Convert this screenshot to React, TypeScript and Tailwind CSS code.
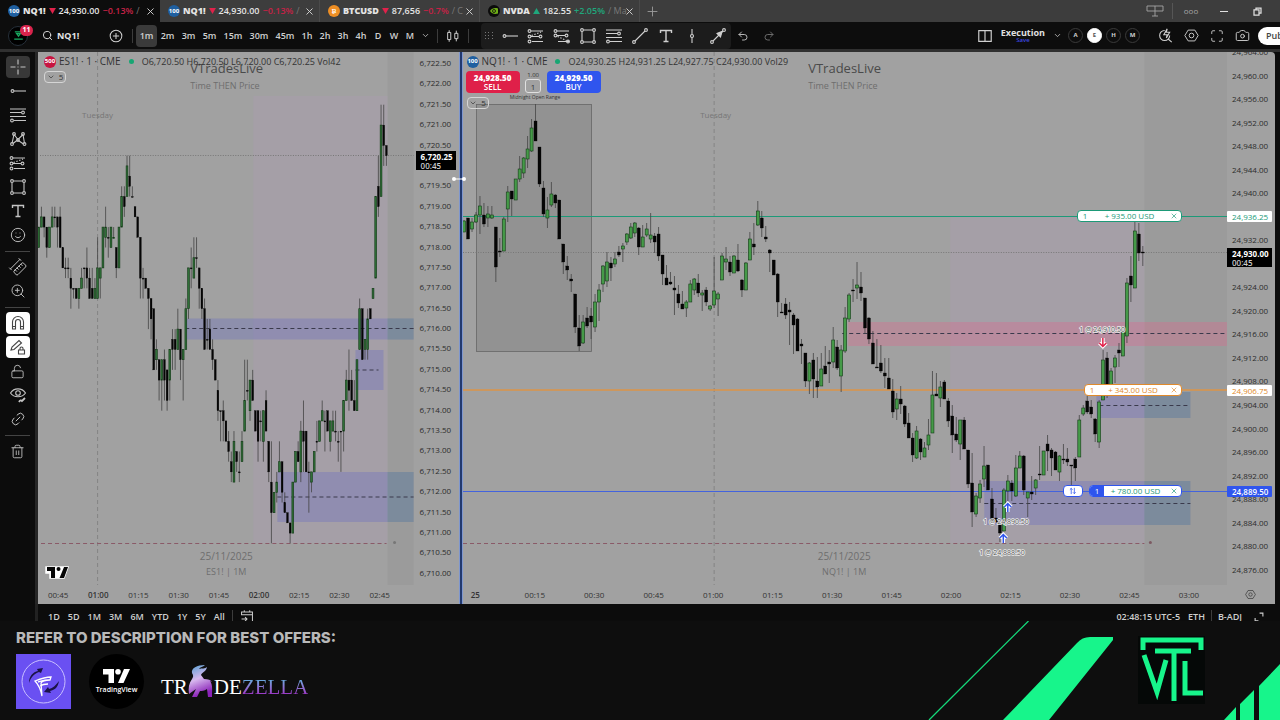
import type { ReactNode } from "react";
import {
  Camera,
  ChevronDown,
  Eye,
  Link2,
  LockOpen,
  Maximize,
  PencilLine,
  Redo2,
  RulerDimensionLine,
  Search,
  Smile,
  Trash2,
  Undo2,
  X,
  ZoomIn,
} from "lucide-react";

// high, body top, body bottom, low, 1 = up; one entry per minute
type Candle = [number, number, number, number, number];

// values are quarter-point ticks below 6,720.25, first candle is 22 minutes before 01:00
const ES_START = -22;
const ES: Candle[] = [
  [7, 7, 9, 9, 1], [5, 6, 7, 7, 1], [6, 6, 7, 8, 0], [7, 7, 9, 10, 0], [7, 7, 9, 9, 1], [5, 6, 7, 7, 1],
  [5, 6, 6, 7, 0], [6, 6, 7, 9, 0], [5, 6, 9, 9, 0], [9, 9, 11, 11, 0], [10, 11, 11, 12, 0], [10, 11, 11, 12, 0],
  [11, 12, 13, 15, 0], [13, 13, 13, 14, 0], [13, 13, 14, 14, 0], [13, 13, 14, 15, 1], [11, 12, 13, 13, 1], [11, 11, 11, 13, 0],
  [9, 11, 12, 13, 0], [11, 12, 14, 14, 0], [11, 13, 14, 14, 0], [12, 13, 14, 14, 1], [8, 11, 14, 14, 1], [11, 11, 12, 14, 1],
  [7, 7, 11, 11, 1], [5, 7, 8, 9, 1], [7, 8, 8, 10, 0], [7, 7, 9, 9, 1], [7, 8, 8, 8, 1], [9, 9, 11, 12, 0],
  [7, 7, 11, 11, 1], [3, 4, 7, 7, 1], [3, 4, 5, 6, 0], [0, 1, 4, 4, 1], [0, 2, 3, 4, 0], [3, 4, 4, 4, 0],
  [5, 5, 6, 6, 0], [6, 6, 8, 8, 0], [8, 8, 12, 14, 0], [11, 12, 12, 14, 0], [12, 12, 13, 13, 0], [13, 13, 14, 17, 0],
  [14, 14, 16, 18, 0], [15, 15, 21, 21, 0], [18, 19, 20, 21, 1], [20, 20, 22, 24, 0], [20, 20, 22, 25, 1], [19, 20, 22, 24, 0],
  [21, 21, 24, 25, 0], [19, 19, 22, 24, 1], [17, 18, 19, 21, 0], [17, 18, 19, 21, 0], [15, 17, 19, 19, 1], [17, 17, 20, 22, 0],
  [19, 19, 20, 24, 1], [14, 15, 19, 19, 1], [11, 11, 15, 16, 1], [9, 11, 11, 13, 0], [8, 10, 12, 12, 1], [8, 10, 10, 11, 0],
  [11, 11, 13, 15, 0], [13, 13, 15, 16, 0], [14, 15, 19, 19, 0], [16, 18, 18, 19, 0], [16, 17, 19, 19, 0], [18, 19, 20, 21, 0],
  [20, 20, 22, 22, 0], [22, 23, 25, 26, 0], [25, 25, 25, 28, 0], [24, 25, 26, 28, 0], [26, 26, 28, 28, 0], [27, 28, 29, 30, 0],
  [29, 30, 31, 32, 0], [27, 28, 32, 32, 1], [29, 29, 30, 31, 0], [29, 31, 31, 32, 0], [27, 28, 30, 30, 1], [20, 24, 27, 27, 1],
  [20, 23, 23, 24, 0], [22, 22, 25, 26, 1], [21, 22, 24, 24, 0], [25, 25, 27, 27, 0], [25, 25, 28, 30, 0], [25, 26, 26, 28, 0],
  [25, 25, 28, 30, 1], [23, 24, 27, 27, 0], [28, 28, 31, 32, 0], [28, 32, 35, 38, 0], [33, 33, 35, 35, 1], [31, 32, 33, 34, 1],
  [28, 30, 31, 31, 1], [30, 30, 33, 34, 0], [33, 34, 35, 35, 0], [35, 35, 36, 36, 0], [36, 36, 37, 38, 0], [32, 32, 37, 37, 1],
  [29, 29, 32, 32, 1], [28, 29, 30, 30, 0], [26, 27, 31, 32, 1], [24, 27, 28, 31, 0], [27, 27, 31, 31, 0], [30, 31, 31, 35, 0],
  [31, 31, 32, 33, 1], [29, 29, 31, 31, 1], [26, 28, 28, 29, 0], [26, 26, 28, 28, 1], [24, 25, 26, 26, 1], [25, 26, 26, 29, 0],
  [25, 25, 27, 27, 0], [26, 26, 28, 29, 1], [25, 26, 27, 27, 1], [25, 27, 27, 28, 0], [27, 28, 28, 30, 0], [27, 27, 27, 31, 0],
  [24, 24, 27, 29, 1], [21, 22, 24, 24, 1], [19, 22, 23, 25, 0], [21, 22, 24, 24, 0], [22, 24, 25, 25, 0], [20, 20, 25, 25, 1],
  [14, 15, 19, 19, 1], [15, 15, 20, 20, 0], [18, 18, 19, 20, 1], [15, 16, 19, 20, 1], [15, 15, 16, 16, 0], [13, 13, 14, 14, 1],
  [4, 4, 12, 12, 1], [0, 3, 5, 6, 0], [-5, -3, 4, 4, 1], [-5, -3, -1, 1, 0], [-1, -1, 0, 1, 0],
];

// values are plot heights, first candle is 63 minutes before 01:00
const NQ_START = -63;
const NQ: Candle[] = [
  [220, 221, 232, 232, 1], [218, 218, 239, 239, 0], [218, 222, 229, 232, 1], [212, 215, 222, 223, 1], [196, 206, 215, 234, 1], [203, 215, 224, 227, 0],
  [206, 214, 218, 227, 1], [206, 215, 218, 219, 1], [227, 227, 267, 282, 0], [238, 251, 252, 257, 0], [217, 219, 251, 251, 1], [186, 192, 209, 222, 1],
  [191, 191, 199, 216, 0], [179, 179, 200, 200, 1], [156, 169, 179, 182, 1], [157, 158, 173, 178, 1], [136, 149, 159, 168, 1], [119, 128, 151, 152, 1],
  [104, 121, 141, 141, 0], [147, 147, 184, 187, 0], [181, 188, 214, 217, 0], [197, 210, 218, 228, 1], [182, 194, 205, 207, 1], [194, 195, 203, 208, 0],
  [200, 200, 239, 239, 0], [244, 244, 262, 274, 0], [256, 266, 270, 280, 0], [274, 279, 281, 292, 0], [294, 294, 327, 333, 0], [315, 328, 346, 351, 0],
  [315, 322, 343, 344, 1], [307, 318, 326, 328, 0], [308, 316, 322, 339, 0], [294, 302, 327, 332, 1], [284, 290, 302, 321, 1], [265, 266, 284, 292, 1],
  [252, 262, 281, 287, 1], [257, 263, 268, 281, 0], [252, 259, 264, 267, 1], [246, 252, 255, 257, 0], [243, 246, 249, 262, 1], [233, 234, 242, 245, 1],
  [223, 227, 238, 239, 1], [222, 223, 233, 237, 1], [227, 228, 247, 255, 0], [225, 237, 247, 247, 1], [223, 229, 235, 237, 1], [213, 235, 239, 243, 1],
  [233, 236, 242, 253, 0], [227, 234, 256, 261, 0], [255, 255, 274, 285, 0], [265, 278, 285, 285, 0], [272, 282, 284, 285, 0], [276, 288, 290, 315, 0],
  [285, 294, 303, 308, 0], [291, 304, 309, 309, 0], [300, 302, 308, 317, 1], [280, 284, 302, 302, 1], [278, 279, 290, 295, 1], [274, 283, 293, 297, 0],
  [290, 293, 295, 311, 1], [287, 290, 302, 306, 0], [305, 306, 309, 311, 1], [257, 291, 305, 308, 1], [292, 294, 299, 316, 1], [253, 256, 280, 280, 1],
  [247, 259, 262, 270, 1], [256, 262, 272, 276, 0], [255, 256, 273, 273, 1], [244, 260, 271, 272, 0], [279, 280, 290, 297, 0], [262, 263, 290, 290, 1],
  [232, 239, 260, 260, 1], [223, 244, 247, 255, 0], [201, 211, 225, 226, 1], [211, 218, 228, 237, 0], [226, 237, 239, 242, 0], [249, 250, 253, 272, 0],
  [260, 260, 275, 275, 0], [273, 274, 302, 317, 0], [303, 312, 313, 313, 0], [298, 304, 315, 319, 0], [302, 310, 312, 345, 0], [313, 315, 325, 354, 0],
  [318, 319, 351, 351, 0], [339, 344, 346, 364, 0], [353, 353, 381, 387, 0], [362, 363, 381, 394, 1], [353, 360, 379, 398, 0], [357, 381, 387, 398, 0],
  [353, 369, 386, 386, 1], [346, 366, 374, 374, 0], [350, 362, 364, 383, 0], [327, 340, 362, 368, 1], [340, 347, 368, 370, 0], [345, 350, 376, 392, 1],
  [307, 318, 351, 353, 1], [293, 295, 319, 322, 1], [279, 290, 291, 302, 0], [262, 285, 288, 299, 1], [272, 287, 293, 301, 0], [298, 298, 328, 334, 0],
  [317, 318, 339, 344, 0], [331, 343, 364, 364, 0], [339, 367, 368, 368, 0], [345, 363, 371, 373, 0], [358, 373, 376, 388, 0], [358, 378, 389, 389, 0],
  [379, 391, 412, 418, 0], [393, 399, 409, 420, 1], [386, 399, 404, 414, 0], [405, 406, 424, 427, 0], [413, 423, 438, 438, 0], [433, 438, 455, 462, 0],
  [426, 431, 458, 459, 1], [438, 439, 452, 460, 0], [442, 448, 457, 457, 1], [419, 435, 445, 450, 1], [371, 395, 433, 433, 1], [373, 394, 396, 396, 0],
  [381, 387, 398, 407, 1], [380, 382, 399, 399, 0], [398, 401, 421, 427, 0], [405, 416, 435, 453, 0], [417, 434, 440, 442, 0], [420, 420, 444, 460, 1],
  [417, 420, 449, 449, 0], [450, 450, 484, 488, 0], [453, 483, 512, 527, 0], [493, 496, 514, 517, 1], [480, 484, 498, 503, 1], [446, 466, 479, 487, 1],
  [465, 465, 490, 490, 0], [488, 499, 519, 519, 0], [508, 518, 522, 523, 0], [522, 524, 533, 542, 0], [488, 490, 531, 531, 1], [475, 481, 491, 501, 1],
  [480, 483, 491, 501, 0], [455, 468, 496, 497, 1], [451, 456, 468, 468, 1], [455, 456, 490, 495, 0], [492, 492, 498, 517, 1], [476, 492, 494, 500, 0],
  [479, 480, 488, 495, 1], [446, 474, 475, 480, 0], [451, 451, 475, 475, 1], [435, 444, 451, 471, 0], [448, 450, 458, 476, 0], [451, 452, 470, 470, 0],
  [455, 456, 472, 481, 1], [444, 459, 460, 464, 0], [448, 459, 462, 466, 0], [465, 465, 466, 487, 0], [457, 459, 468, 481, 0], [415, 420, 457, 457, 1],
  [405, 408, 414, 416, 1], [395, 401, 412, 414, 0], [400, 407, 414, 418, 0], [418, 419, 434, 442, 0], [400, 402, 442, 448, 1], [350, 360, 400, 400, 1],
  [352, 358, 384, 398, 0], [368, 371, 390, 390, 1], [355, 358, 367, 383, 1], [343, 350, 353, 367, 0], [330, 332, 356, 356, 1], [278, 283, 336, 343, 1],
  [256, 276, 285, 302, 0], [221, 231, 288, 288, 1], [223, 234, 253, 261, 0], [246, 252, 253, 266, 0],
];

// rows hidden behind a price tag stay blank
const scale = (from: number, step: number, count: number, blank: number[]) =>
  Array.from({ length: count }, (_, i) => {
    const v = from - i * step;
    return blank.includes(v) ? "" : v.toLocaleString("en-US", { minimumFractionDigits: 2 });
  });

const esPrices = scale(6722.5, 0.5, 26, [6720]);
const nqPrices = scale(24964, 4, 23, [24936, 24928]);
const esTimes = ["00:45", "01:00", "01:15", "01:30", "01:45", "02:00", "02:15", "02:30", "02:45"];
const nqTimes = ["25", "00:15", "00:30", "00:45", "01:00", "01:15", "01:30", "01:45", "02:00", "02:15", "02:30", "02:45", "03:00"];

const intervals = [
  { label: "1m", w: "w-[21px]" }, { label: "2m", w: "w-[21px]" }, { label: "3m", w: "w-[21px]" }, { label: "5m", w: "w-[21px]" },
  { label: "15m", w: "w-[26px]" }, { label: "30m", w: "w-[26px]" }, { label: "45m", w: "w-[26px]" },
  { label: "1h", w: "w-[18px]" }, { label: "2h", w: "w-[18px]" }, { label: "3h", w: "w-[18px]" }, { label: "4h", w: "w-[18px]" },
  { label: "D", w: "w-4" }, { label: "W", w: "w-4" }, { label: "M", w: "w-4" },
];

const PLOT_H = 533;
const PLOT_TOP = 52;
const pct = (y: number) => `${((y - PLOT_TOP) / PLOT_H) * 100}%`;

function Icon({ children, size = 18 }: { children: ReactNode; size?: number }) {
  return (
    <svg width={size} height={size} viewBox="0 0 18 18" fill="none" stroke="currentColor" strokeWidth="1.1" aria-hidden="true">
      {children}
    </svg>
  );
}

const Ring = ({ x, y }: { x: number; y: number }) => <circle cx={x} cy={y} r="1.4" />;

const HRay = () => <Icon><Ring x={3.5} y={9} /><path d="M5 9h12" /></Icon>;
const FibRetrace = () => (
  <Icon><path d="M1 3h16M1 6.500h11.500M1 10.500h16M5 14.500h12" /><Ring x={14} y={6.5} /><Ring x={3} y={14.5} /></Icon>
);
const Position = () => (
  <Icon>
    <path d="M4 4h12M4 9.500h8M5 14.500h11" /><path d="M4.500 8.500 14 5" strokeDasharray="1.500 1.500" />
    <Ring x={2.5} y={4} /><Ring x={2.5} y={9.5} /><Ring x={13.5} y={9.5} /><Ring x={2.5} y={14.5} />
  </Icon>
);
const ShortPosition = () => (
  <Icon>
    <path d="M4 4h12M4 8.500h8M5 14.500h11" /><path d="m4.500 9.500 9 4" strokeDasharray="1.500 1.500" />
    <Ring x={2.5} y={4} /><Ring x={2.5} y={8.5} /><Ring x={13.5} y={8.5} /><Ring x={15} y={14.5} />
  </Icon>
);
const RectTool = () => (
  <Icon>
    <path d="M4.500 3h9M4.500 15h9M3 4.500v9M15 4.500v9" />
    <Ring x={3} y={3} /><Ring x={15} y={3} /><Ring x={3} y={15} /><Ring x={15} y={15} />
  </Icon>
);
const Pattern = () => (
  <Icon>
    <path d="M3 13.500 5 4.500l4 5 5-5 1.500 9M4 13.500l4.500-3.500 6 4" />
    <Ring x={3} y={14} /><Ring x={5} y={4} /><Ring x={9} y={10} /><Ring x={14} y={4} /><Ring x={15.5} y={14} />
  </Icon>
);
const Trend = () => <Icon><Ring x={3} y={15} /><Ring x={15} y={3} /><path d="M4 14 14 4" /></Icon>;
const TextTool = () => <Icon><path d="M3.500 6V3.500h11V6M9 3.500v11M6.500 14.500h5" strokeWidth="1.400" /></Icon>;
const VLine = () => <Icon><path d="M9 2v5.500M9 10.500V16" /><circle cx="9" cy="9" r="1.500" /></Icon>;
const ArrowTool = () => (
  <Icon><Ring x={3} y={15} /><Ring x={15} y={3} /><path d="M4 14 14 4" /><path d="m13 4.500-1.500 5.500-3.500-3.500z" fill="currentColor" /></Icon>
);
const MagnetIcon = () => (
  <Icon><path d="M3.500 15V8a5.500 5.500 0 0 1 11 0v7h-3V8a2.500 2.500 0 0 0-5 0v7zM3.500 12.500h3M11.500 12.500h3" /></Icon>
);
const PencilLock = () => (
  <Icon><path d="m2 12 1-3 7-6.500 2.500 2.500L5 11.500zM9.500 12h6v4h-6zM11 12v-1.500a1.500 1.500 0 0 1 3 0V12" /></Icon>
);
const EyeBrush = () => (
  <Icon><path d="M1.500 7C5 1.500 13 1.500 16.500 7 13 12 5 12 1.500 7z" /><circle cx="9" cy="7" r="2.300" /><path d="M10 16c1-2 2-2 3-1l3-3" strokeWidth="1.800" /></Icon>
);
const Crosshair = () => <Icon><path d="M9 1.500v5M9 11.500v5M1.500 9h5M11.500 9h5M8.500 9h1" /></Icon>;
const CandlesIcon = () => <Icon size={16}><path d="M3 5h3.500v8H3zM4.700 2.500V5M4.700 13v2.500M11 6h3.500v6H11zM12.700 3v3M12.700 12v3" /></Icon>;
const HexNut = ({ size = 16 }: { size?: number }) => (
  <Icon size={size}><path d="M5 2.500h8L17 9l-4 6.500H5L1 9z" /><circle cx="9" cy="9" r="2.800" /></Icon>
);

function Candles({ data, start, x0, step, width, green, y }: {
  data: Candle[]; start: number; x0: number; step: number; width: number; green: string; y: (v: number) => number;
}) {
  return (
    <g>
      {data.map(([high, top, bottom, low, up], i) => {
        const x = x0 + (start + i) * step;
        const h = Math.max(y(bottom) - y(top), 1);
        return (
          <g key={i}>
            <path d={`M${x} ${y(high)}V${y(low)}`} stroke="#444" strokeWidth="0.8" />
            <rect x={x - width / 2} y={y(top)} width={width} height={h} fill={up ? green : "#050505"} stroke={up ? "#153a18" : "#050505"} strokeWidth={up ? 0.6 : 0.3} />
          </g>
        );
      })}
    </g>
  );
}

function Tab({ badge, symbol, price, change, rest, up, active }: {
  badge: ReactNode; symbol: string; price: string; change: string; rest: string; up?: boolean; active?: boolean;
}) {
  return (
    <div className={`flex w-40 shrink-0 items-center pl-2 pr-1 ${active ? "bg-[#0d0d0d]" : "border-r border-[#4a4a4a]"}`}>
      {badge}
      <a href="#chart" className="ml-[3px] flex min-w-0 flex-1 items-center gap-[3px] whitespace-nowrap text-[9px] font-semibold text-[#e4e4e4]">
        <b>{symbol}</b>
        <svg viewBox="0 0 8 7" className={`h-[6px] w-[7px] shrink-0 ${up ? "rotate-180 text-[#1fa77c]" : "text-[#e0224b]"}`}>
          <path d="M0 0h8L4 7z" fill="currentColor" />
        </svg>
        <span>{price}</span>
        <span className={up ? "text-[#1fa77c]" : "text-[#c52246]"}>{change}</span>
        <span className="font-normal text-[#777]">{rest}</span>
      </a>
      <button aria-label={`Close ${symbol}`} className="text-[#d8d8d8]"><X size={11} /></button>
    </div>
  );
}

const IndexBadge = ({ n, color }: { n: string; color: string }) => (
  <span className={`flex size-3 shrink-0 items-center justify-center rounded-full text-[6px] font-bold text-white ${color}`}>{n}</span>
);

const Sep = () => <span className="h-[14px] w-px shrink-0 bg-[#3c3c3c]" />;

function TopBar() {
  return (
    <header className="shrink-0">
      <nav className="flex h-[22px] bg-[#3d3d3d]">
        <Tab active badge={<IndexBadge n="100" color="bg-[#1f5fa0]" />} symbol="NQ1!" price="24,930.00" change="−0.13%" rest="/" />
        <Tab badge={<IndexBadge n="100" color="bg-[#1f5fa0]" />} symbol="NQ1!" price="24,930.00" change="−0.13%" rest="/" />
        <Tab badge={<IndexBadge n="₿" color="bg-[#ee8e24]" />} symbol="BTCUSD" price="87,656" change="−0.7%" rest="/ C" />
        <Tab
          up
          badge={
            <svg viewBox="0 0 12 12" className="size-3 shrink-0">
              <circle cx="6" cy="6" r="6" fill="#0b0b0b" />
              <path d="M2 6c2-3 5-3.500 8-2.500v5C7 9.500 4 9 2 6z" fill="#6fae17" />
              <circle cx="6" cy="6" r="1.500" fill="none" stroke="#0b0b0b" strokeWidth="0.800" />
            </svg>
          }
          symbol="NVDA" price="182.55" change="+2.05%" rest="/ Ma"
        />
        <button aria-label="New tab" className="ml-[7px] text-[#9a9a9a]"><Icon size={11}><path d="M9 1v16M1 9h16" strokeWidth="1.500" /></Icon></button>
        <div className="ml-auto flex items-center text-[#a5a5a5]">
          <Icon><path d="M1 4h16v5H1zM9 4v10M6 14h6" strokeWidth="0.900" /></Icon>
          <span className="mx-2 h-4 w-px bg-[#565656]" />
          <button aria-label="More" className="w-5 text-[8px]">ooo</button>
          <button aria-label="Minimize" className="ml-3 flex w-[22px] justify-center text-[#e0e0e0]"><i className="h-px w-2 bg-current" /></button>
          <button aria-label="Restore" className="ml-[18px] mr-[18px] text-[#e0e0e0]">
            <Icon size={9}><path d="M2 5.500h10V16H2zM6 5V2h10v10h-4" strokeWidth="2.500" /></Icon>
          </button>
        </div>
      </nav>

      <div className="flex h-[27px] items-center bg-[#0d0d0d] text-[#d0d0d0]">
        <div className="relative ml-2 flex size-5 shrink-0 items-center justify-center rounded-full border border-[#26303a] bg-black text-[#1aa860]">
          <Icon size={11}><path d="M3 3h12M6 6h6l-3 4zM2 15h14" strokeWidth="2" /></Icon>
          <span className="absolute -right-[6px] -top-[2px] flex h-[11px] w-[13px] items-center justify-center rounded-full bg-[#d8244c] text-[7px] font-bold text-white">11</span>
        </div>
        <button className="ml-[14px] flex w-[67px] items-center gap-1 text-[9px] font-bold text-[#e4e4e4]">
          <Search size={11} />NQ1!
        </button>
        <button aria-label="Compare symbol" className="mr-[9px]">
          <Icon size={14}><circle cx="9" cy="9" r="7.500" strokeWidth="1.300" /><path d="M9 5v8M5 9h8" strokeWidth="1.300" /></Icon>
        </button>
        <Sep />
        <div className="ml-[3px] flex items-center text-[9px] font-semibold">
          {intervals.map(({ label, w }) => (
            <button key={label} className={`${w} h-[22px] rounded-sm text-center ${label === "1m" ? "bg-[#3a3a3a]" : ""}`}>{label}</button>
          ))}
          <button aria-label="More intervals" className="flex w-[15px] justify-center"><ChevronDown size={9} /></button>
        </div>
        <div className="ml-1 flex items-center">
          <Sep />
          <button aria-label="Chart type" className="mx-[7px]"><CandlesIcon /></button>
          <Sep />
        </div>
        <div className="ml-3 flex h-[26px] items-center rounded bg-[#1c1c1c]">
          <span className="grid w-4 grid-cols-3 gap-[2px] px-1">
            {Array.from({ length: 9 }, (_, i) => <i key={i} className="size-px bg-[#777]" />)}
          </span>
          {[HRay, Position, ShortPosition, RectTool, FibRetrace, Trend, TextTool, VLine, ArrowTool].map((Tool, i) => (
            <button key={i} aria-label="Drawing tool" className="flex w-[26px] justify-center"><Tool /></button>
          ))}
        </div>
        <button aria-label="Undo" className="ml-[6px] flex w-[26px] justify-start text-[#b5b5b5]"><Undo2 size={12} /></button>
        <button aria-label="Redo" className="text-[#6b6b6b]"><Redo2 size={12} /></button>

        <div className="ml-auto flex shrink-0 items-center">
          <button aria-label="Layout"><Icon size={16}><path d="M2 3h14v12H2zM9 3v12" strokeWidth="1.300" /></Icon></button>
          <button className="ml-2 text-center text-[9px] font-bold leading-[9px] text-[#e0e0e0]">
            Execution
            <span className="block text-[6px] font-semibold leading-[6px] text-[#3c48e0]">Save</span>
          </button>
          <ChevronDown size={9} className="ml-2" />
          <div className="mx-[6px] flex gap-1">
            {["A", "E", "H", "M"].map((l) => (
              <button key={l} className={`size-[15px] rounded-full border text-[6px] font-bold ${l === "E" ? "border-white bg-white text-[#555]" : "border-[#3a3a3a]"}`}>{l}</button>
            ))}
          </div>
          <span className="ml-1"><Sep /></span>
          <div className="flex items-center gap-[11px] px-2">
            <button aria-label="Quick search"><Icon size={15}><path d="M14 9A6 6 0 1 1 8 3M12.500 13.500l4 3.500M11 1 7 8h4l-1 4 4-7h-4z" strokeWidth="1.300" /></Icon></button>
            <button aria-label="Settings"><HexNut size={15} /></button>
            <button aria-label="Fullscreen"><Maximize size={14} strokeWidth={1.5} /></button>
            <button aria-label="Snapshot"><Camera size={15} strokeWidth={1.5} /></button>
          </div>
          <button className="h-[18px] w-[22px] overflow-hidden rounded-l-full bg-white pl-2 text-left text-[9px] font-semibold text-[#444]">Pub</button>
        </div>
      </div>
    </header>
  );
}

function SideBar() {
  const cell = "flex h-6 w-full items-center justify-center";
  const rule = <div className="flex h-2 items-center px-[5px]"><span className="h-px w-full bg-[#444]" /></div>;
  return (
    <aside className="flex w-[35px] shrink-0 flex-col bg-[#0c0c0c] pt-[3px] text-[#c4c4c4]">
      <button aria-label="Cross" className={cell}><span className="flex h-[22px] w-6 items-center justify-center rounded bg-[#383838]"><Crosshair /></span></button>
      {[HRay, FibRetrace, Pattern, Position, RectTool, TextTool].map((Tool, i) => (
        <button key={i} aria-label="Drawing tool" className={cell}><Tool /></button>
      ))}
      <button aria-label="Icons" className={cell}><Smile size={16} strokeWidth={1.4} /></button>
      {rule}
      <button aria-label="Measure" className={cell}><RulerDimensionLine size={16} strokeWidth={1.4} className="-rotate-45" /></button>
      <button aria-label="Zoom in" className={cell}><ZoomIn size={16} strokeWidth={1.4} /></button>
      {rule}
      <button aria-label="Magnet" className={cell}><span className="flex h-[22px] w-6 items-center justify-center rounded bg-white text-[#444]"><MagnetIcon /></span></button>
      <button aria-label="Stay in drawing mode" className={cell}><span className="flex h-[22px] w-6 items-center justify-center rounded bg-white text-[#444]"><PencilLock /></span></button>
      <button aria-label="Lock" className={cell}><LockOpen size={15} strokeWidth={1.4} /></button>
      <button aria-label="Hide" className={cell}><EyeBrush /></button>
      <button aria-label="Link" className={cell}><Link2 size={16} strokeWidth={1.4} className="-rotate-45" /></button>
      {rule}
      <button aria-label="Remove" className={cell}><Trash2 size={15} strokeWidth={1.4} /></button>
    </aside>
  );
}

function Legend({ n, color, name, values }: { n: string; color: string; name: string; values: string }) {
  return (
    <div className="flex items-center whitespace-nowrap text-[#333]">
      <IndexBadge n={n} color={color} />
      <span className="ml-[3px] text-[10px]">{name}</span>
      <i className="ml-2 size-[5px] rounded-full bg-[#17a673]" />
      <span className="ml-2 text-[9px]">{values}</span>
    </div>
  );
}

const Collapse = () => (
  <button className="flex h-3 w-[22px] items-center justify-center gap-1 rounded-sm border border-[#d5d5d5] text-[8px] text-[#333]">
    <ChevronDown size={8} />5
  </button>
);

function TimeAxis({ labels, strong = [], className }: { labels: string[]; strong?: string[]; className: string }) {
  return (
    <div className={`flex h-[19px] items-center text-[8px] text-[#333] ${className}`}>
      {labels.map((t) => (
        <span key={t} className={`flex-1 text-center ${strong.includes(t) ? "font-semibold" : ""}`}>{t}</span>
      ))}
    </div>
  );
}

function LastPrice({ y, price }: { y: number; price: string }) {
  return (
    <div className="absolute inset-x-0 bg-black pl-[5px] text-[8px] leading-[9px] text-white" style={{ top: pct(y) }}>
      <b className="block pt-px">{price}</b>
      <span className="block font-semibold text-[#ccc]">00:45</span>
    </div>
  );
}

function EsPane() {
  const y = (t: number) => 155.7 + t * 10.2;
  return (
    <section className="relative flex w-[34%] shrink-0 flex-col overflow-hidden bg-[#a1a1a1]">
      <div className="flex min-h-0 flex-1">
        <svg viewBox="38 52 375 533" preserveAspectRatio="none" className="h-full min-w-0 flex-1">
          <rect x="387" y="52" width="26" height="533" fill="#9b9b9b" />
          <rect x="253" y="96" width="134" height="447" fill="#a59fa7" />
          <g fill="#5b62c8" fillOpacity="0.28">
            <rect x="185" y="318.5" width="228" height="21" />
            <rect x="355" y="350" width="28" height="40" />
            <rect x="277" y="472" width="136" height="50" />
          </g>
          <g fill="#4a8a70" fillOpacity="0.2">
            <rect x="387" y="318.5" width="26" height="21" />
            <rect x="387" y="472" width="26" height="50" />
          </g>
          <g stroke="#3a3a4c" strokeWidth="1" strokeDasharray="4 3">
            <path d="M185 328.500H413M355 370H378M277 497H413" />
            <path d="M97.500 52V585" stroke="#848484" />
            <path d="M41 543.500H386" stroke="#8a5a68" />
          </g>
          <path d="M40 155.500H413" stroke="#777" strokeDasharray="1 1.500" />
          <Candles data={ES} start={ES_START} x0={97.5} step={2.67} width={1.8} green="#2f7038" y={y} />
          <g fontFamily="'Open Sans', sans-serif" fill="#4a4a4a">
            <text x="190" y="73" fontSize="13">VTradesLive</text>
            <text x="190" y="89" fontSize="9" fill="#6e6e6e">Time THEN Price</text>
            <text x="82" y="118" fontSize="8" fill="#777">Tuesday</text>
            <text x="226" y="560" fontSize="10" fill="#6e6e6e" textAnchor="middle">25/11/2025</text>
            <text x="226" y="575" fontSize="9" fill="#6e6e6e" textAnchor="middle">ES1! | 1M</text>
          </g>
          <circle cx="394" cy="542.5" r="1.5" fill="#777" />
          <g transform="translate(46 567)">
            <path d="M0 0h22l-4 11H4V6H0z" fill="#fff" stroke="#fff" strokeWidth="1.5" />
            <path d="M1 0h8v11H5V4H1zM18 11h-4.500L18 0h4z" fill="#050505" />
            <circle cx="12.5" cy="2" r="2" fill="#050505" />
          </g>
        </svg>
        <div className="relative flex w-[45px] shrink-0 flex-col justify-between pb-[7px] pl-[6px] pt-[6px] text-[8px] leading-[10px] text-[#2c2c2c]">
          {esPrices.map((p, i) => <span key={i} className="h-[10px]">{p}</span>)}
          <div className="absolute left-[2px] top-0 h-full w-10"><LastPrice y={151} price="6,720.25" /></div>
        </div>
      </div>
      <TimeAxis labels={esTimes} strong={["01:00", "02:00"]} className="w-[86%]" />
      <div className="absolute left-[6px] top-0.5 flex flex-col gap-[2px]">
        <Legend n="500" color="bg-[#c81440]" name="ES1! · 1 · CME" values="O6,720.50  H6,720.50  L6,720.00  C6,720.25  Vol42" />
        <Collapse />
      </div>
    </section>
  );
}

const orders = [
  { y: 216, usd: "+ 935.00 USD", price: "24,936.25", box: "w-[105px] border-[#1d9a78] text-[#1d9a78]", qty: "", tag: "bg-white text-[#1d9a78]" },
  { y: 390, usd: "+ 345.00 USD", price: "24,906.75", box: "w-[98px] border-[#e08a2c] text-[#e08a2c]", qty: "", tag: "bg-white text-[#e08a2c]" },
  { y: 491, usd: "+ 780.00 USD", price: "24,889.50", box: "w-[93px] border-[#2f55ee] text-[#1d9a78]", qty: "bg-[#2f55ee] text-white", tag: "bg-[#2f55ee] font-semibold text-white" },
];

const fills = [
  { x: 1101.5, y: 342, color: "#e0224b", d: "M0-4V4M-3.500 1 0 4.500 3.500 1" },
  { x: 1006.5, y: 508, color: "#2f55ee", d: "M0 4V-4M-3.500-1 0-4.500 3.500-1" },
  { x: 1002, y: 539, color: "#2f55ee", d: "M0 4V-4M-3.500-1 0-4.500 3.500-1" },
];

function NqPane() {
  return (
    <section className="relative flex min-w-0 flex-1 flex-col overflow-hidden rounded-tr bg-[#a1a1a1]">
      <div className="relative flex min-h-0 flex-1">
        <svg viewBox="462 52 764 533" preserveAspectRatio="none" className="h-full min-w-0 flex-1">
          <rect x="1143" y="52" width="83" height="533" fill="#9b9b9b" />
          <rect x="949" y="217" width="194" height="326" fill="#a59fa7" />
          <rect x="475.5" y="104.5" width="115" height="247" fill="#929292" stroke="#666" strokeWidth="0.8" />
          <rect x="847" y="322" width="379" height="24" fill="#e0668c" fillOpacity="0.34" />
          <g fill="#5b62c8" fillOpacity="0.28">
            <rect x="1095" y="392" width="94" height="26" />
            <rect x="983" y="481" width="206" height="44" />
          </g>
          <g fill="#4a8a70" fillOpacity="0.2">
            <rect x="1143" y="392" width="46" height="26" />
            <rect x="1143" y="481" width="46" height="44" />
          </g>
          <g stroke="#3a3a4c" strokeDasharray="4 3">
            <path d="M841 333.500H1226M1098 405.500H1189M983 503.500H1189" />
            <path d="M713 52V585" stroke="#848484" />
            <path d="M462 543.500H1143" stroke="#8a5a68" />
          </g>
          <path d="M462 252.500H1226" stroke="#777" strokeDasharray="1 1.500" />
          <path d="M462 216.500H1226" stroke="#1d9a78" />
          <path d="M462 390H1226" stroke="#dc9447" strokeWidth="1.5" />
          <path d="M462 491.500H1226" stroke="#4363dd" />
          <Candles data={NQ} start={NQ_START} x0={713} step={3.967} width={3} green="#459a48" y={(v) => v} />
          <g fontFamily="'Open Sans', sans-serif" fill="#4a4a4a">
            <text x="807" y="73" fontSize="13">VTradesLive</text>
            <text x="807" y="89" fontSize="9" fill="#6e6e6e">Time THEN Price</text>
            <text x="699" y="118" fontSize="8" fill="#777">Tuesday</text>
            <text x="534" y="99" fontSize="5" fill="#333" textAnchor="middle">Midnight Open Range</text>
            <text x="843" y="560" fontSize="10" fill="#6e6e6e" textAnchor="middle">25/11/2025</text>
            <text x="843" y="575" fontSize="9" fill="#6e6e6e" textAnchor="middle">NQ1! | 1M</text>
            <g fontSize="7" fill="#555" stroke="#ececec" strokeWidth="1.5" paintOrder="stroke">
              <text x="1078" y="332">1 @ 24,910.50</text>
              <text x="982" y="524">1 @ 24,890.50</text>
              <text x="978" y="555">1 @ 24,888.50</text>
            </g>
          </g>
          {fills.map((f) => (
            <g key={f.x} transform={`translate(${f.x} ${f.y})`} fill="none">
              <path d={f.d} stroke="#fff" strokeWidth="3.5" />
              <path d={f.d} stroke={f.color} strokeWidth="1.5" />
            </g>
          ))}
          <circle cx="1149" cy="542.5" r="1.5" fill="#7d5a62" />
        </svg>
        <div className="relative w-12 shrink-0 overflow-hidden">
          <div className="-mt-[5px] flex h-full flex-col justify-between pb-[5px] pl-[5px] text-[8px] leading-[10px] text-[#2c2c2c]">
            {nqPrices.map((p, i) => <span key={i} className="h-[10px]">{p}</span>)}
          </div>
          <div className="absolute left-0 top-0 h-full w-[45px]">
            {orders.map((o) => (
              <span key={o.price} className={`absolute inset-x-0 rounded-[1px] pl-[5px] text-[8px] leading-[11px] ${o.tag}`} style={{ top: pct(o.y - 5) }}>{o.price}</span>
            ))}
            <LastPrice y={248} price="24,930.00" />
          </div>
        </div>
        {orders.map((o) => (
          <div key={o.usd} className={`absolute right-[93px] flex h-3 items-center overflow-hidden rounded-sm border bg-white text-[8px] ${o.box}`} style={{ top: pct(o.y - 6) }}>
            <span className={`w-[14px] text-center leading-3 ${o.qty}`}>1</span>
            <span className="flex-1 text-center">{o.usd}</span>
            <button aria-label="Cancel order" className="flex w-[14px] justify-center"><X size={8} /></button>
          </div>
        ))}
        <button aria-label="Reverse position" className="absolute right-[192px] flex h-3 w-5 items-center justify-center rounded-sm border border-[#2f55ee] bg-white text-[#2f55ee]" style={{ top: pct(485) }}>
          <Icon size={8}><path d="M5 16V3M2 6l3-3 3 3M12 2v13M9 12l3 3 3-3" strokeWidth="1.8" /></Icon>
        </button>
      </div>
      <div className="flex items-center">
        <TimeAxis labels={nqTimes} strong={["25"]} className="-ml-[17px] w-[773px]" />
        <span className="ml-[26px] text-[#333]"><HexNut size={11} /></span>
      </div>
      <div className="absolute left-[4px] top-0.5 flex flex-col gap-1">
        <Legend n="100" color="bg-[#1f5fa0]" name="NQ1! · 1 · CME" values="O24,930.25  H24,931.25  L24,927.75  C24,930.00  Vol29" />
        <div className="-ml-px -mt-[2px] flex h-[22px] items-center gap-[5px] text-center text-[8px] leading-[9px]">
          <button className="h-[22px] w-[54px] rounded bg-[#df2049] font-semibold text-white"><b className="block">24,928.50</b>SELL</button>
          <label className="flex w-[17px] flex-col items-center text-[6px] leading-[8px] text-[#333]">
            1.00
            <input defaultValue="1" className="h-[14px] w-4 rounded-[3px] border border-[#e0e0e0] text-center text-[8px]" />
          </label>
          <button className="h-[22px] w-[54px] rounded bg-[#2f55ee] font-semibold text-white"><b className="block">24,929.50</b>BUY</button>
        </div>
        <Collapse />
      </div>
    </section>
  );
}

function RangeBar() {
  return (
    <div className="flex h-[17px] shrink-0 items-start overflow-hidden bg-[#0c0c0c] pl-[35px] pr-4 text-[9px] font-semibold leading-[26px] text-[#cfcfcf]">
      <div className="flex gap-2 border-l-[3px] border-[#222] pl-[10px]">
        {["1D", "5D", "1M", "3M", "6M", "YTD", "1Y", "5Y", "All"].map((r) => <button key={r}>{r}</button>)}
      </div>
      <span className="mx-[7px] mt-[6px] h-3 w-px bg-[#3c3c3c]" />
      <button aria-label="Go to date" className="mt-[5px]">
        <Icon size={14}><path d="M2 8V4h14v12h-5M2 7.500h14M5.500 1.500V4M12.500 1.500V4M2 13h7M6.500 10.500 9 13l-2.500 2.500" strokeWidth="1.3" /></Icon>
      </button>
      <div className="ml-auto flex">
        <span>02:48:15 UTC-5</span>
        <button className="ml-2">ETH</button>
        <span className="mx-[6px] mt-[6px] h-3 w-px bg-[#3c3c3c]" />
        <button>B-ADJ</button>
        <span className="ml-3 mt-2"><Icon size={10}><path d="M10 2h6v6M2 11v5h6" strokeWidth="2" /></Icon></span>
      </div>
    </div>
  );
}

function Offers() {
  return (
    <footer className="flex h-[99px] shrink-0 justify-between overflow-hidden bg-[#0e0e0e]">
      <div className="pl-4 pt-2">
        <h2 className="font-[Inter] text-[15px] font-extrabold leading-[18px] text-[#b9b9b9]">REFER TO DESCRIPTION FOR BEST OFFERS:</h2>
        <div className="mt-[7px] flex items-center">
          <svg viewBox="0 0 55 55" className="size-[55px]">
            <path d="M0 0h55v55H0z" fill="#6a50f2" />
            <circle cx="27.5" cy="27.5" r="21.5" fill="none" stroke="#c9c0ff" strokeWidth="1" />
            <path d="M13 29c0-7 4-11 9-12l-1-2 6-1-2 5-2-1c-5 2-8 5-10 11zM43 27c-1 6-4 9-9 10l1 2-7-1 4-5 1 2c4-1 7-4 10-8z" fill="#1b1347" />
            <path d="M19 27c5-2 11-4 16-4l-1 3c-4 0-8 1-9 3l1 13c-1-5-2-10-7-15zM22 28c4-1 8-3 12-2M24 32c3-2 6-2 8-2" fill="none" stroke="#fff" strokeWidth="1.3" />
          </svg>
          <div className="ml-[18px] flex size-[55px] flex-col items-center justify-center rounded-full bg-black text-white">
            <svg viewBox="0 0 27 14" className="h-[14px] w-[27px]" fill="currentColor">
              <path d="M0 0h11v14H5.500V5.500H0zM20.500 14H15L21 0h6z" /><circle cx="15" cy="2.8" r="2.8" />
            </svg>
            <span className="mt-[2px] text-[7px] font-semibold leading-[9px]">TradingView</span>
          </div>
          <div className="ml-[17px] flex items-end font-['Liberation_Serif',serif] text-[21px] leading-[26px] text-white">
            <span>TR</span>
            <svg viewBox="0 0 26 36" className="h-9 w-[26px]">
              <defs>
                <linearGradient id="beast" x1="0" y1="0" x2="0.3" y2="1">
                  <stop offset="0" stopColor="#4f9fd0" /><stop offset="0.5" stopColor="#d7b8ee" /><stop offset="1" stopColor="#8a22b8" />
                </linearGradient>
              </defs>
              <path d="M4 9C3 4 9 1 17 1c-2 2-5 2-6 4 3-1 6 0 8-2-1 5-5 5-6 8l3 4c4 0 7 1 8 3l-2-1c3 4 2 9 2 16h-4l-1-8c-3 2-5 2-7 2l-3 6H4l4-8-7 5c-1-6 0-11 3-15 2-3 1-4 0-6z" fill="url(#beast)" />
            </svg>
            <span>DE</span>
            <span className="bg-linear-to-b from-[#6aa4dd] from-25% to-[#9a2cc4] to-80% bg-clip-text text-transparent">ZELLA</span>
          </div>
        </div>
      </div>
      <svg viewBox="920 621 360 99" className="h-[99px] w-[360px]">
        <path d="M1028.500 621 929 720" stroke="#14d97a" strokeWidth="1.3" />
        <path d="M1003 720 1077 643Q1082 637 1090 637H1113V640L1049 720Z" fill="#17f58b" />
        <path d="M1224 720 1236 707V720ZM1240 720V704L1254 690V720ZM1259 720V686L1280 664V720Z" fill="#17f58b" />
        <rect x="1138" y="636" width="67" height="68" fill="#050807" />
        <g fill="none" stroke="#17f58b" strokeWidth="5">
          <path d="M1143 650V640H1201V650" />
          <path d="M1144 655 1157 692 1166 660M1174 651V701M1185 661V693H1203" />
          <path d="M1155 651H1191" />
        </g>
      </svg>
    </footer>
  );
}

export default function App() {
  return (
    <div className="flex h-screen w-full flex-col overflow-hidden bg-[#0c0c0c] font-['Open_Sans',sans-serif]">
      <TopBar />
      <main className="flex min-h-0 flex-1 border-t-[3px] border-[#303030]">
        <SideBar />
        <div id="chart" className="flex min-w-0 flex-1 border-l-[3px] border-[#262626] pr-[5px]">
          <EsPane />
          <div className="relative z-10 w-1 shrink-0 border-x border-[#7f97cf] bg-[#22396f]">
            <svg viewBox="0 0 14 6" className="absolute -left-[8px] top-[124px] h-[6px] w-[14px]">
              <path d="M2 3h10" stroke="#fff" /><circle cx="2" cy="3" r="2" fill="#fff" /><circle cx="12" cy="3" r="2" fill="#fff" />
            </svg>
          </div>
          <NqPane />
        </div>
      </main>
      <RangeBar />
      <Offers />
    </div>
  );
}
